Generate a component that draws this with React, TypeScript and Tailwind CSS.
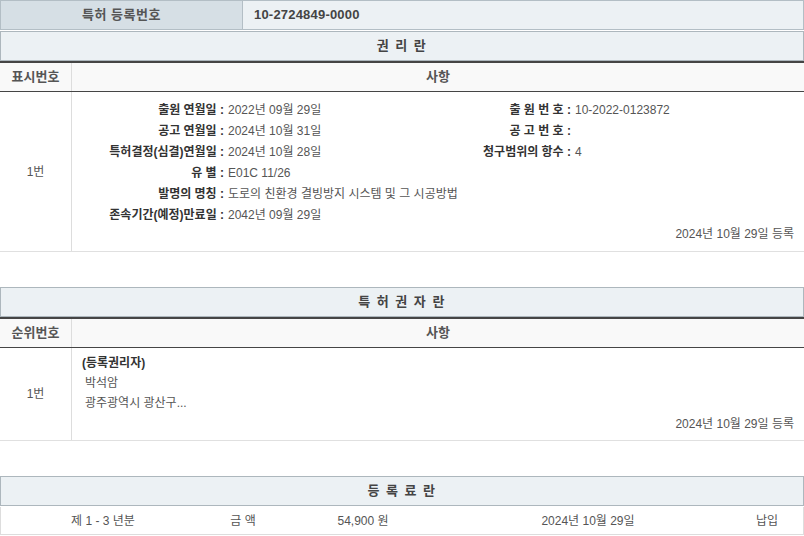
import React from "react";

const FONT = {
  fontFamily: '"Liberation Sans", "Noto Sans CJK KR", sans-serif',
};

type Info = { label: string; value: string; label2?: string; value2?: string; wide?: boolean };

const RIGHTS: Info[] = [
  { label: "출원 연월일 :", value: "2022년 09월 29일", label2: "출 원 번 호 :", value2: "10-2022-0123872" },
  { label: "공고 연월일 :", value: "2024년 10월 31일", label2: "공 고 번 호 :", value2: "" },
  { label: "특허결정(심결)연월일 :", value: "2024년 10월 28일", label2: "청구범위의 항수 :", value2: "4" },
  { label: "유 별 :", value: "E01C 11/26" },
  { label: "발명의 명칭 :", value: "도로의 친환경 결빙방지 시스템 및 그 시공방법", wide: true },
  { label: "존속기간(예정)만료일 :", value: "2042년 09월 29일" },
];

function SectionTitle({ title }: { title: string }) {
  return (
    <div className="h-[30px] border border-[#adb7bd] bg-[#ecf1f4] flex items-center justify-center text-[13px] font-bold tracking-[1.5px] text-[#444]">
      {title}
    </div>
  );
}

function HeadRow({ left }: { left: string }) {
  return (
    <div className="grid grid-cols-[72px_1fr] h-[31px] border-t-2 border-b border-t-[#454545] border-b-[#454545] bg-[#f9f9f9] text-[13px] font-bold text-[#555]">
      <div className="flex items-center justify-center border-r border-[#ddd]">{left}</div>
      <div className="flex items-center justify-center">사항</div>
    </div>
  );
}

export default function App() {
  return (
    <div className="w-[804px] h-[536px] overflow-hidden bg-white text-[12px] text-[#555]" style={FONT}>
      {/* 등록번호 */}
      <div className="flex h-[30px] border border-[#b3bec5]">
        <div className="w-[242px] bg-[#d6dfe5] border-r border-[#b3bec5] flex items-center justify-center text-[13px] font-bold tracking-[0.5px] text-[#555]">
          특허 등록번호
        </div>
        <div className="flex-1 bg-[#ecf1f4] flex items-center pl-[11px] text-[13px] font-bold tracking-[0.2px] text-[#444]">
          10-2724849-0000
        </div>
      </div>

      {/* 권리란 */}
      <div className="mt-px">
        <SectionTitle title="권 리 란" />
        <HeadRow left="표시번호" />
        <div className="grid grid-cols-[72px_1fr] h-[160px] border-b border-[#e0e0e0]">
          <div className="flex items-center justify-center border-r border-[#ddd]">1번</div>
          <div className="flex flex-col pt-[7px] pr-[10px]">
            <div className="grid grid-cols-[152px_192px_155px_1fr] auto-rows-[21px]">
              {RIGHTS.map((r) => (
                <React.Fragment key={r.label}>
                  <div className="flex items-center justify-end font-bold text-[#333] whitespace-nowrap">{r.label}</div>
                  <div className={`flex items-center pl-[4px] whitespace-nowrap ${r.wide ? "col-span-3" : ""}`}>{r.value}</div>
                  {!r.wide && (
                    <>
                      <div className="flex items-center justify-end font-bold text-[#333] whitespace-nowrap">{r.label2 ?? ""}</div>
                      <div className="flex items-center pl-[4px] whitespace-nowrap">{r.value2 ?? ""}</div>
                    </>
                  )}
                </React.Fragment>
              ))}
            </div>
            <div className="text-right leading-[20px] -mt-px">2024년 10월 29일 등록</div>
          </div>
        </div>
      </div>

      {/* 특허권자란 */}
      <div className="mt-[35px]">
        <SectionTitle title="특 허 권 자 란" />
        <HeadRow left="순위번호" />
        <div className="grid grid-cols-[72px_1fr] h-[93px] border-b border-[#e0e0e0]">
          <div className="flex items-center justify-center border-r border-[#ddd]">1번</div>
          <div className="flex flex-col pt-[5px] pl-[10px] pr-[10px] leading-[20px]">
            <div className="font-bold text-[#333]">(등록권리자)</div>
            <div className="pl-[3px]">박석암</div>
            <div className="pl-[3px] leading-[21px]">광주광역시 광산구...</div>
            <div className="text-right">2024년 10월 29일 등록</div>
          </div>
        </div>
      </div>

      {/* 등록료란 */}
      <div className="mt-[35px]">
        <SectionTitle title="등 록 료 란" />
        <div className="mt-px grid grid-cols-[204px_76px_164px_286px_1fr] h-[28px] border-x border-b border-[#ddd] items-center text-center">
          <div>제 1 - 3 년분</div>
          <div>금 액</div>
          <div>54,900 원</div>
          <div>2024년 10월 29일</div>
          <div>납입</div>
        </div>
      </div>
    </div>
  );
}
